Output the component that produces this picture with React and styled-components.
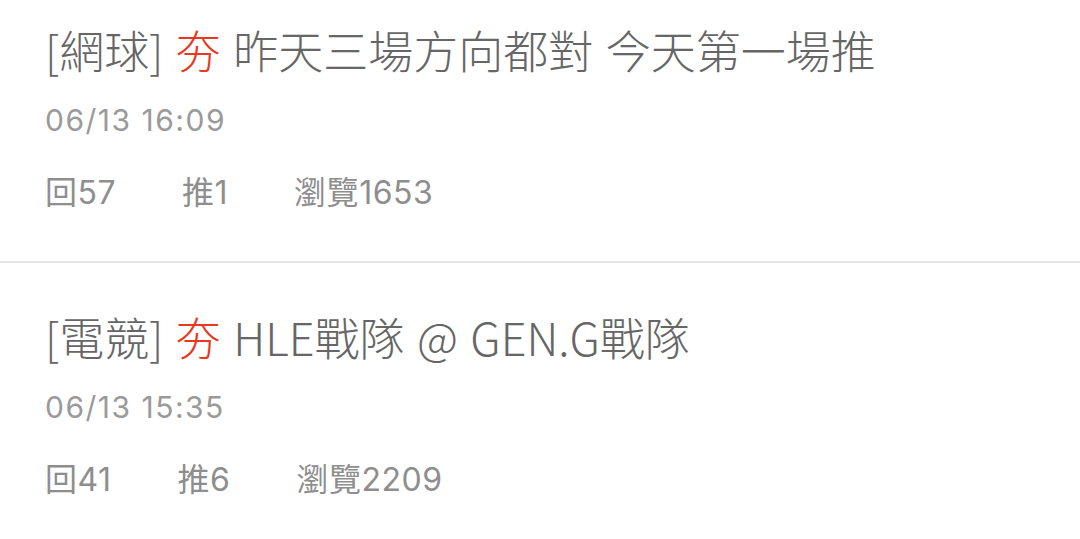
import styled, { createGlobalStyle } from "styled-components";

const posts = [
  {
    board: "網球",
    title: "昨天三場方向都對 今天第一場推",
    time: "06/13 16:09",
    replies: 57,
    pushes: 1,
    views: 1653,
  },
  {
    board: "電競",
    title: "HLE戰隊 @ GEN.G戰隊",
    time: "06/13 15:35",
    replies: 41,
    pushes: 6,
    views: 2209,
  },
];

export default function App() {
  return (
    <>
      <GlobalStyle />
      <List>
        {posts.map((p) => (
          <Item key={p.time}>
            <Title>
              [{p.board}] <Hot>夯</Hot> {p.title}
            </Title>
            <Meta>{p.time}</Meta>
            <Stats>
              <span>回{p.replies}</span>
              <span>推{p.pushes}</span>
              <span>瀏覽{p.views}</span>
            </Stats>
          </Item>
        ))}
      </List>
    </>
  );
}

const GlobalStyle = createGlobalStyle`
  body {
    margin: 0;
    background: #ffffff;
    font-family: Inter, "Noto Sans CJK TC", sans-serif;
    overflow: hidden;
  }
`;

const List = styled.div`
  display: flex;
  flex-direction: column;
  margin-top: -24px;
`;

const Item = styled.div`
  display: flex;
  flex-direction: column;
  padding: 46px 45px 48px;
  border-bottom: 2px solid #e4e4e4;
`;

const Title = styled.div`
  font-family: "Noto Sans CJK TC", sans-serif;
  font-size: 45px;
  font-weight: 300;
  line-height: 56px;
  word-spacing: 2.5px;
  color: #666666;
  white-space: nowrap;
`;

const Hot = styled.span`
  color: #e8391f;
`;

const Meta = styled.div`
  margin-top: 22px;
  font-size: 30px;
  line-height: 40px;
  letter-spacing: 1.5px;
  color: #9a9a9a;
`;

const Stats = styled.div`
  display: flex;
  gap: 66px;
  margin-top: 33px;
  font-size: 32px;
  line-height: 40px;
  letter-spacing: 0.5px;
  color: #8e8e8e;
`;
